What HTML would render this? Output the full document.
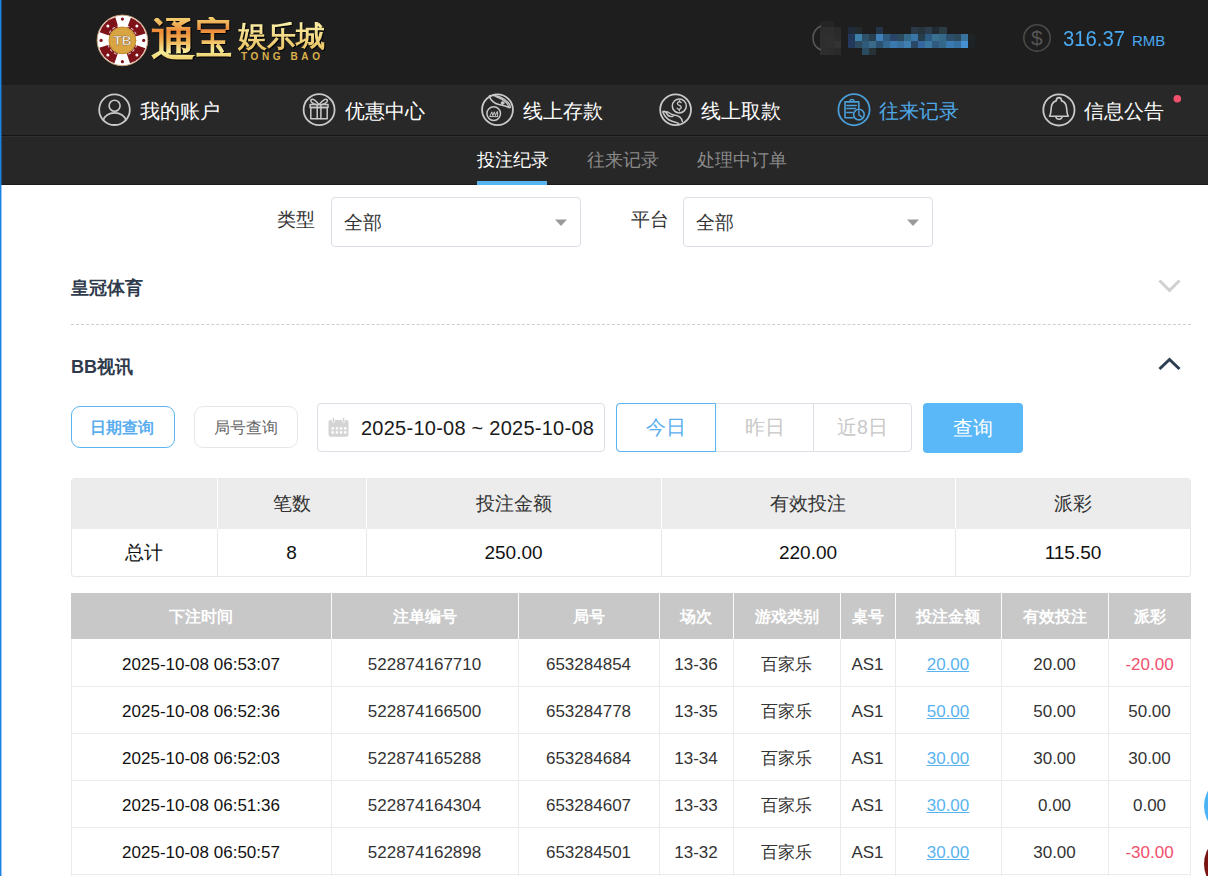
<!DOCTYPE html><html><head><meta charset="utf-8"><style>
*{margin:0;padding:0;box-sizing:border-box}
html,body{width:1208px;height:876px;overflow:hidden;background:#fff;font-family:"Liberation Sans",sans-serif}
.abs{position:absolute}
.t{position:absolute;white-space:nowrap;line-height:1}
</style></head><body>
<div class="abs" style="left:0;top:0;width:1208px;height:85px;background:#1e1e1e"></div>
<div class="abs" style="left:0;top:85px;width:1208px;height:50px;background:#282828"></div>
<div class="abs" style="left:0;top:137px;width:1208px;height:48px;background:#272727"></div>
<div class="abs" style="left:0;top:134.5px;width:1208px;height:1.5px;background:#151515"></div>
<div class="abs" style="left:0;top:136px;width:1208px;height:1px;background:#2f2f2f"></div>
<div class="abs" style="left:0;top:183.5px;width:1208px;height:1.5px;background:#1b1b1b"></div>
<div class="t" style="left:140px;top:101px;font-size:20px;color:#ffffff">我的账户</div>
<div class="t" style="left:344.5px;top:101px;font-size:20px;color:#ffffff">优惠中心</div>
<div class="t" style="left:523px;top:101px;font-size:20px;color:#ffffff">线上存款</div>
<div class="t" style="left:701px;top:101px;font-size:20px;color:#ffffff">线上取款</div>
<div class="t" style="left:879px;top:101px;font-size:20px;color:#4fa8ea">往来记录</div>
<div class="t" style="left:1084px;top:101px;font-size:20px;color:#ffffff">信息公告</div>
<div class="t" style="left:477px;top:152px;font-size:17.5px;color:#fff">投注纪录</div>
<div class="abs" style="left:477px;top:181px;width:70px;height:4px;background:#56b4f0"></div>
<div class="t" style="left:587px;top:152px;font-size:17.5px;color:#8a8a8a">往来记录</div>
<div class="t" style="left:697px;top:152px;font-size:17.5px;color:#8a8a8a">处理中订单</div>
<div class="t" style="left:1062.5px;top:28px;font-size:22px;transform:scaleX(0.92);transform-origin:0 0;color:#4aaaf2">316.37</div>
<div class="t" style="left:1132px;top:33px;font-size:15px;color:#4aa8f0">RMB</div>
<div class="abs" style="left:0;top:0;width:1px;height:876px;background:#1a84e0"></div><div class="abs" style="left:1px;top:0;width:1px;height:876px;background:rgba(26,132,224,0.45)"></div>
<div class="t" style="left:277px;top:210px;font-size:19px;color:#333">类型</div>
<div class="abs" style="left:331px;top:197px;width:250px;height:50px;border:1px solid #dcdfe6;border-radius:4px"></div>
<div class="t" style="left:344px;top:213px;font-size:19px;color:#333">全部</div>
<div class="t" style="left:631px;top:210px;font-size:19px;color:#333">平台</div>
<div class="abs" style="left:683px;top:197px;width:250px;height:50px;border:1px solid #dcdfe6;border-radius:4px"></div>
<div class="t" style="left:696px;top:213px;font-size:19px;color:#333">全部</div>
<div class="t" style="left:71px;top:279px;font-size:18px;font-weight:bold;color:#2f3b4c">皇冠体育</div>
<div class="abs" style="left:71px;top:324px;width:1120px;height:0;border-top:1px dashed #cfcfcf"></div>
<div class="t" style="left:71px;top:358px;font-size:18px;font-weight:bold;color:#2f3b4c">BB视讯</div>
<div class="abs" style="left:71px;top:406px;width:104px;height:42px;border:1px solid #5cb4f2;border-radius:9px"></div>
<div class="t" style="left:90px;top:420px;font-size:16px;font-weight:bold;color:#5aaeef">日期查询</div>
<div class="abs" style="left:194px;top:406px;width:104px;height:42px;border:1px solid #e6e6e6;border-radius:9px"></div>
<div class="t" style="left:213.5px;top:420px;font-size:16px;color:#666">局号查询</div>
<div class="abs" style="left:317px;top:403px;width:288px;height:49px;border:1px solid #dcdfe6;border-radius:4px"></div>
<div class="t" style="left:361px;top:418px;font-size:20px;letter-spacing:0.25px;color:#1a1a1a">2025-10-08 ~ 2025-10-08</div>
<div class="abs" style="left:616px;top:403px;width:296px;height:49px;border:1px solid #dcdfe6;border-radius:4px"></div>
<div class="abs" style="left:616px;top:403px;width:100px;height:49px;border:1px solid #5cb4f2;border-radius:4px 0 0 4px"></div>
<div class="abs" style="left:813px;top:404px;width:1px;height:47px;background:#dcdfe6"></div>
<div class="t" style="left:646px;top:418px;font-size:19.5px;color:#5aaeef">今日</div>
<div class="t" style="left:745px;top:418px;font-size:19.5px;color:#c8c8c8">昨日</div>
<div class="t" style="left:837px;top:418px;font-size:19.5px;color:#c8c8c8">近8日</div>
<div class="abs" style="left:923px;top:403px;width:100px;height:50px;background:#5ab8f8;border-radius:4px"></div>
<div class="t" style="left:953px;top:418px;font-size:20px;color:#fff">查询</div>
<div class="abs" style="left:71px;top:478px;width:1120px;height:99px;border:1px solid #e8e8e8;border-radius:3px;overflow:hidden">
<div class="abs" style="left:-1px;top:-1px;width:1122px;height:51px;background:#ececec"></div>
</div>
<div class="abs" style="left:217px;top:478px;width:1px;height:51px;background:#fff"></div>
<div class="abs" style="left:217px;top:529px;width:1px;height:48px;background:#e8e8e8"></div>
<div class="abs" style="left:366px;top:478px;width:1px;height:51px;background:#fff"></div>
<div class="abs" style="left:366px;top:529px;width:1px;height:48px;background:#e8e8e8"></div>
<div class="abs" style="left:661px;top:478px;width:1px;height:51px;background:#fff"></div>
<div class="abs" style="left:661px;top:529px;width:1px;height:48px;background:#e8e8e8"></div>
<div class="abs" style="left:955px;top:478px;width:1px;height:51px;background:#fff"></div>
<div class="abs" style="left:955px;top:529px;width:1px;height:48px;background:#e8e8e8"></div>
<div class="t" style="left:71px;width:146px;text-align:center;top:494px;font-size:19px;color:#333"></div>
<div class="t" style="left:71px;width:146px;text-align:center;top:543px;font-size:19px;color:#111">总计</div>
<div class="t" style="left:217px;width:149px;text-align:center;top:494px;font-size:19px;color:#333">笔数</div>
<div class="t" style="left:217px;width:149px;text-align:center;top:543px;font-size:19px;color:#111">8</div>
<div class="t" style="left:366px;width:295px;text-align:center;top:494px;font-size:19px;color:#333">投注金额</div>
<div class="t" style="left:366px;width:295px;text-align:center;top:543px;font-size:19px;color:#111">250.00</div>
<div class="t" style="left:661px;width:294px;text-align:center;top:494px;font-size:19px;color:#333">有效投注</div>
<div class="t" style="left:661px;width:294px;text-align:center;top:543px;font-size:19px;color:#111">220.00</div>
<div class="t" style="left:955px;width:236px;text-align:center;top:494px;font-size:19px;color:#333">派彩</div>
<div class="t" style="left:955px;width:236px;text-align:center;top:543px;font-size:19px;color:#111">115.50</div>
<div class="abs" style="left:71px;top:593px;width:1120px;height:46px;background:#c8c8c8"></div>
<div class="abs" style="left:331px;top:593px;width:1px;height:46px;background:#fbfbfb"></div>
<div class="abs" style="left:331px;top:639px;width:1px;height:237px;background:#ebebeb"></div>
<div class="abs" style="left:518px;top:593px;width:1px;height:46px;background:#fbfbfb"></div>
<div class="abs" style="left:518px;top:639px;width:1px;height:237px;background:#ebebeb"></div>
<div class="abs" style="left:659px;top:593px;width:1px;height:46px;background:#fbfbfb"></div>
<div class="abs" style="left:659px;top:639px;width:1px;height:237px;background:#ebebeb"></div>
<div class="abs" style="left:733px;top:593px;width:1px;height:46px;background:#fbfbfb"></div>
<div class="abs" style="left:733px;top:639px;width:1px;height:237px;background:#ebebeb"></div>
<div class="abs" style="left:840px;top:593px;width:1px;height:46px;background:#fbfbfb"></div>
<div class="abs" style="left:840px;top:639px;width:1px;height:237px;background:#ebebeb"></div>
<div class="abs" style="left:895px;top:593px;width:1px;height:46px;background:#fbfbfb"></div>
<div class="abs" style="left:895px;top:639px;width:1px;height:237px;background:#ebebeb"></div>
<div class="abs" style="left:1001px;top:593px;width:1px;height:46px;background:#fbfbfb"></div>
<div class="abs" style="left:1001px;top:639px;width:1px;height:237px;background:#ebebeb"></div>
<div class="abs" style="left:1108px;top:593px;width:1px;height:46px;background:#fbfbfb"></div>
<div class="abs" style="left:1108px;top:639px;width:1px;height:237px;background:#ebebeb"></div>
<div class="abs" style="left:71px;top:639px;width:1px;height:237px;background:#ebebeb"></div>
<div class="abs" style="left:1190px;top:639px;width:1px;height:237px;background:#ebebeb"></div>
<div class="abs" style="left:71px;top:686px;width:1120px;height:1px;background:#ebebeb"></div>
<div class="abs" style="left:71px;top:733px;width:1120px;height:1px;background:#ebebeb"></div>
<div class="abs" style="left:71px;top:780px;width:1120px;height:1px;background:#ebebeb"></div>
<div class="abs" style="left:71px;top:827px;width:1120px;height:1px;background:#ebebeb"></div>
<div class="abs" style="left:71px;top:874px;width:1120px;height:1px;background:#ebebeb"></div>
<div class="t" style="left:71px;width:260px;text-align:center;top:609px;font-size:16px;font-weight:bold;color:#fff">下注时间</div>
<div class="t" style="left:331px;width:187px;text-align:center;top:609px;font-size:16px;font-weight:bold;color:#fff">注单编号</div>
<div class="t" style="left:518px;width:141px;text-align:center;top:609px;font-size:16px;font-weight:bold;color:#fff">局号</div>
<div class="t" style="left:659px;width:74px;text-align:center;top:609px;font-size:16px;font-weight:bold;color:#fff">场次</div>
<div class="t" style="left:733px;width:107px;text-align:center;top:609px;font-size:16px;font-weight:bold;color:#fff">游戏类别</div>
<div class="t" style="left:840px;width:55px;text-align:center;top:609px;font-size:16px;font-weight:bold;color:#fff">桌号</div>
<div class="t" style="left:895px;width:106px;text-align:center;top:609px;font-size:16px;font-weight:bold;color:#fff">投注金额</div>
<div class="t" style="left:1001px;width:107px;text-align:center;top:609px;font-size:16px;font-weight:bold;color:#fff">有效投注</div>
<div class="t" style="left:1108px;width:83px;text-align:center;top:609px;font-size:16px;font-weight:bold;color:#fff">派彩</div>
<div class="t" style="left:71px;width:260px;text-align:center;top:656px;font-size:17px;color:#111;">2025-10-08 06:53:07</div>
<div class="t" style="left:331px;width:187px;text-align:center;top:656px;font-size:17px;color:#333;">522874167710</div>
<div class="t" style="left:518px;width:141px;text-align:center;top:656px;font-size:17px;color:#333;">653284854</div>
<div class="t" style="left:659px;width:74px;text-align:center;top:656px;font-size:17px;color:#333;">13-36</div>
<div class="t" style="left:733px;width:107px;text-align:center;top:656px;font-size:17px;color:#333;">百家乐</div>
<div class="t" style="left:840px;width:55px;text-align:center;top:656px;font-size:17px;color:#333;">AS1</div>
<div class="t" style="left:895px;width:106px;text-align:center;top:656px;font-size:17px;color:#5ab4f0;text-decoration:underline;">20.00</div>
<div class="t" style="left:1001px;width:107px;text-align:center;top:656px;font-size:17px;color:#333;">20.00</div>
<div class="t" style="left:1108px;width:83px;text-align:center;top:656px;font-size:17px;color:#f0506e;">-20.00</div>
<div class="t" style="left:71px;width:260px;text-align:center;top:703px;font-size:17px;color:#111;">2025-10-08 06:52:36</div>
<div class="t" style="left:331px;width:187px;text-align:center;top:703px;font-size:17px;color:#333;">522874166500</div>
<div class="t" style="left:518px;width:141px;text-align:center;top:703px;font-size:17px;color:#333;">653284778</div>
<div class="t" style="left:659px;width:74px;text-align:center;top:703px;font-size:17px;color:#333;">13-35</div>
<div class="t" style="left:733px;width:107px;text-align:center;top:703px;font-size:17px;color:#333;">百家乐</div>
<div class="t" style="left:840px;width:55px;text-align:center;top:703px;font-size:17px;color:#333;">AS1</div>
<div class="t" style="left:895px;width:106px;text-align:center;top:703px;font-size:17px;color:#5ab4f0;text-decoration:underline;">50.00</div>
<div class="t" style="left:1001px;width:107px;text-align:center;top:703px;font-size:17px;color:#333;">50.00</div>
<div class="t" style="left:1108px;width:83px;text-align:center;top:703px;font-size:17px;color:#333;">50.00</div>
<div class="t" style="left:71px;width:260px;text-align:center;top:750px;font-size:17px;color:#111;">2025-10-08 06:52:03</div>
<div class="t" style="left:331px;width:187px;text-align:center;top:750px;font-size:17px;color:#333;">522874165288</div>
<div class="t" style="left:518px;width:141px;text-align:center;top:750px;font-size:17px;color:#333;">653284684</div>
<div class="t" style="left:659px;width:74px;text-align:center;top:750px;font-size:17px;color:#333;">13-34</div>
<div class="t" style="left:733px;width:107px;text-align:center;top:750px;font-size:17px;color:#333;">百家乐</div>
<div class="t" style="left:840px;width:55px;text-align:center;top:750px;font-size:17px;color:#333;">AS1</div>
<div class="t" style="left:895px;width:106px;text-align:center;top:750px;font-size:17px;color:#5ab4f0;text-decoration:underline;">30.00</div>
<div class="t" style="left:1001px;width:107px;text-align:center;top:750px;font-size:17px;color:#333;">30.00</div>
<div class="t" style="left:1108px;width:83px;text-align:center;top:750px;font-size:17px;color:#333;">30.00</div>
<div class="t" style="left:71px;width:260px;text-align:center;top:797px;font-size:17px;color:#111;">2025-10-08 06:51:36</div>
<div class="t" style="left:331px;width:187px;text-align:center;top:797px;font-size:17px;color:#333;">522874164304</div>
<div class="t" style="left:518px;width:141px;text-align:center;top:797px;font-size:17px;color:#333;">653284607</div>
<div class="t" style="left:659px;width:74px;text-align:center;top:797px;font-size:17px;color:#333;">13-33</div>
<div class="t" style="left:733px;width:107px;text-align:center;top:797px;font-size:17px;color:#333;">百家乐</div>
<div class="t" style="left:840px;width:55px;text-align:center;top:797px;font-size:17px;color:#333;">AS1</div>
<div class="t" style="left:895px;width:106px;text-align:center;top:797px;font-size:17px;color:#5ab4f0;text-decoration:underline;">30.00</div>
<div class="t" style="left:1001px;width:107px;text-align:center;top:797px;font-size:17px;color:#333;">0.00</div>
<div class="t" style="left:1108px;width:83px;text-align:center;top:797px;font-size:17px;color:#333;">0.00</div>
<div class="t" style="left:71px;width:260px;text-align:center;top:844px;font-size:17px;color:#111;">2025-10-08 06:50:57</div>
<div class="t" style="left:331px;width:187px;text-align:center;top:844px;font-size:17px;color:#333;">522874162898</div>
<div class="t" style="left:518px;width:141px;text-align:center;top:844px;font-size:17px;color:#333;">653284501</div>
<div class="t" style="left:659px;width:74px;text-align:center;top:844px;font-size:17px;color:#333;">13-32</div>
<div class="t" style="left:733px;width:107px;text-align:center;top:844px;font-size:17px;color:#333;">百家乐</div>
<div class="t" style="left:840px;width:55px;text-align:center;top:844px;font-size:17px;color:#333;">AS1</div>
<div class="t" style="left:895px;width:106px;text-align:center;top:844px;font-size:17px;color:#5ab4f0;text-decoration:underline;">30.00</div>
<div class="t" style="left:1001px;width:107px;text-align:center;top:844px;font-size:17px;color:#333;">30.00</div>
<div class="t" style="left:1108px;width:83px;text-align:center;top:844px;font-size:17px;color:#f0506e;">-30.00</div>
<svg class="abs" style="left:0;top:0" width="1208" height="876" viewBox="0 0 1208 876" fill="none" stroke-linecap="round" stroke-linejoin="round"><g stroke="#c9c9c9" stroke-width="1.8"><circle cx="114.5" cy="109.7" r="15.3"/><circle cx="114.6" cy="105.7" r="5.5" stroke-width="1.6"/><path d="M103.4,120.2 A11.3,8.4 0 0 1 125.8,120.2" stroke-width="1.7"/></g><g stroke="#c9c9c9" stroke-width="1.5"><circle cx="319.1" cy="109.7" r="15.5" stroke-width="1.8"/><rect x="310.1" y="104.6" width="17.9" height="3"/><rect x="310.8" y="107.6" width="16.4" height="11.1"/><path d="M317.2,104.8 V118.7 M320.9,104.8 V118.7"/><path d="M319,104.6 C316.5,101 313,98.5 311.3,99.6 C309.8,100.8 312,103.6 316,104.4"/><path d="M319.2,104.6 C321.7,101 325.2,98.5 326.9,99.6 C328.4,100.8 326.2,103.6 322.2,104.4"/></g><g stroke="#c9c9c9" stroke-width="1.6"><circle cx="497.5" cy="109.7" r="15.4" stroke-width="1.8"/><circle cx="493.7" cy="113.6" r="6.8" stroke-width="1.5"/><path d="M489.6,116.6 H497.8 M490.2,115.6 L491.8,111.8 L492.8,115.6 L494.4,111.8 L495.4,115.6 L497,111.8 M497.6,111.8 V115.6" stroke-width="1"/><path d="M489.5,95.8 C495,94.8 500,96.5 504.5,99.5 C508,101.8 510.5,104 510.3,107.3" stroke-width="1.5"/><path d="M495.5,96.4 C499,97.7 503,99.7 506.3,102.6 C507.8,104 508.5,105.8 508.8,107.4" stroke-width="1.3"/><path d="M489.4,96.6 C491,100.6 494.5,103.5 499,104.6 C502,105.2 505,105.6 509.6,107.8" stroke-width="1.5"/><circle cx="502.6" cy="103" r="1.4" fill="#c9c9c9" stroke-width="1"/></g><g stroke="#c9c9c9" stroke-width="1.6"><circle cx="675.6" cy="109.7" r="15.4" stroke-width="1.8"/><circle cx="679.3" cy="105.9" r="7" stroke-width="1.5"/><path d="M681.2,102.6 C680.5,101.8 679,101.6 678,102.3 C677,103 677.3,104.4 678.6,105 L680.2,105.8 C681.4,106.4 681.5,108 680.4,108.7 C679.3,109.4 677.8,109 677.2,108.3 M679.4,100.6 V101.8 M679.4,109.4 V110.8" stroke-width="1.3"/><path d="M662.8,111.8 C663.6,110.8 665,111 665.8,112.2 L668.5,116 M664.8,112 C666,111.5 668,112 669.4,113 C671,114.4 673,115 675,115.2 C678.5,115.5 681.5,117.5 682.3,121.4 M668.5,115.4 C669.8,116.5 671.5,116.6 673,116.2 M663,112.4 C664.5,116 668,119.8 671.5,121 C674.5,122 677.5,122.5 678.6,123.4" stroke-width="1.5"/></g><g stroke="#4b9fd9" stroke-width="1.6"><circle cx="854" cy="109.7" r="15.6" stroke-width="1.8"/><path d="M858.8,108.2 V101.9 H845 V117.8 H853"/><path d="M849.8,101.6 A2.1,2.1 0 0 1 854,101.6" stroke-width="1.4"/><path d="M846.8,105.6 H856.3 M846.8,108.6 H855.5 M846.8,112.4 H852.3" stroke-width="1.5"/><circle cx="858.9" cy="114.6" r="5.3"/><path d="M858.9,110.8 V114.9 L861.6,116.9" stroke-width="1.4"/></g><g stroke="#c9c9c9" stroke-width="1.6"><circle cx="1058.9" cy="109.9" r="15.6" stroke-width="1.8"/><path d="M1049.6,116.3 H1068.3 C1067.2,114.2 1066.7,111.5 1066.6,108.3 C1066.4,104.2 1064.6,101.6 1061.6,100.9 C1061.5,98.9 1060.6,97.6 1058.9,97.6 C1057.2,97.6 1056.3,98.9 1056.2,100.9 C1053.2,101.6 1051.4,104.2 1051.2,108.3 C1051.1,111.5 1050.6,114.2 1049.6,116.3 Z"/><path d="M1055.8,116.8 A3.3,3.3 0 0 0 1062.2,116.8" stroke-width="1.5"/></g><circle cx="1177.3" cy="98.7" r="3.8" fill="#f0506e"/><circle cx="1037" cy="37.9" r="13.2" stroke="#4a4a4a" stroke-width="1.6"/><path d="M555,219.5 H567 L561,226 Z" fill="#9a9a9a"/><path d="M907,219.5 H919 L913,226 Z" fill="#9a9a9a"/><polyline points="1159.5,280.5 1169.5,290.5 1179.5,280.5" stroke="#d0d0d0" stroke-width="3" stroke-linecap="butt" stroke-linejoin="miter"/><polyline points="1159.5,369 1169.5,359.5 1179.5,369" stroke="#2c3e50" stroke-width="3" stroke-linecap="butt" stroke-linejoin="miter"/><g><rect x="328.5" y="420" width="20" height="16.8" rx="2" fill="#d4d4d4"/><rect x="332.2" y="417.4" width="2.4" height="5" rx="1" fill="#d4d4d4" stroke="#fff" stroke-width="0.8"/><rect x="342.4" y="417.4" width="2.4" height="5" rx="1" fill="#d4d4d4" stroke="#fff" stroke-width="0.8"/><rect x="331.5" y="427.2" width="2.4" height="2.4" fill="#fff"/><rect x="335.7" y="427.2" width="2.4" height="2.4" fill="#fff"/><rect x="339.9" y="427.2" width="2.4" height="2.4" fill="#fff"/><rect x="344.1" y="427.2" width="2.4" height="2.4" fill="#fff"/><rect x="331.5" y="431.2" width="2.4" height="2.4" fill="#fff"/><rect x="335.7" y="431.2" width="2.4" height="2.4" fill="#fff"/><rect x="339.9" y="431.2" width="2.4" height="2.4" fill="#fff"/><rect x="344.1" y="431.2" width="2.4" height="2.4" fill="#fff"/></g><g><circle cx="122.4" cy="40.4" r="25.3" fill="#fff" stroke="#caa27a" stroke-width="1"/><circle cx="122.4" cy="40.4" r="18.9" stroke="#7d1218" stroke-width="10.6" stroke-dasharray="17.3 12.4" transform="rotate(18.8 122.4 40.4)" stroke-linecap="butt"/><circle cx="136.90" cy="54.90" r="1.5" fill="#fff"/><circle cx="107.90" cy="54.90" r="1.5" fill="#fff"/><circle cx="107.90" cy="25.90" r="1.5" fill="#fff"/><circle cx="136.90" cy="25.90" r="1.5" fill="#fff"/><circle cx="143.70" cy="40.40" r="1.6" fill="#7d1218"/><circle cx="122.40" cy="61.70" r="1.6" fill="#7d1218"/><circle cx="101.10" cy="40.40" r="1.6" fill="#7d1218"/><circle cx="122.40" cy="19.10" r="1.6" fill="#7d1218"/><circle cx="122.4" cy="40.4" r="15" stroke="#fff" stroke-width="1.2" stroke-dasharray="2 3" opacity="0.7"/><circle cx="122.4" cy="40.4" r="13.4" fill="#d9a542" stroke="#c08a2a" stroke-width="1"/><text x="122.6" y="45.3" text-anchor="middle" font-family="Liberation Sans" font-weight="bold" font-size="13.5" fill="#ffffff" stroke="#8a6028" stroke-width="0.5">TB</text></g></svg>
<div class="t" style="left:1031px;top:27px;font-size:21px;color:#555">$</div>
<div class="t" style="left:151px;top:18px;font-family:'Liberation Serif',serif;font-size:45px;font-weight:bold;background:linear-gradient(180deg,#f3d070 0%,#ec8a3a 30%,#f0b050 50%,#f8ec9a 75%,#e8c45a 100%);-webkit-background-clip:text;color:transparent;filter:drop-shadow(1px 1.5px 0.5px #000)">通</div>
<div class="t" style="left:196px;top:17px;font-family:'Liberation Serif',serif;font-size:44px;font-weight:bold;transform:scaleX(0.82);transform-origin:0 0;background:linear-gradient(180deg,#f3d070 0%,#ec8a3a 30%,#f0b050 50%,#f8ec9a 75%,#e8c45a 100%);-webkit-background-clip:text;color:transparent;filter:drop-shadow(1px 1.5px 0.5px #000)">宝</div>
<div class="t" style="left:238px;top:22px;font-family:'Liberation Serif',serif;font-size:29px;font-weight:bold;background:linear-gradient(180deg,#fbf0a8 0%,#e8c060 100%);-webkit-background-clip:text;color:transparent;filter:drop-shadow(1px 1px 0 #000)">娱乐城</div>
<div class="t" style="left:241px;top:52px;font-family:'Liberation Sans',sans-serif;font-size:10px;font-weight:bold;letter-spacing:3.6px;color:#dcb04a">TONG BAO</div>
<div class="abs" style="left:820.4px;top:20.5px;width:7px;height:7px;background:#252525"></div><div class="abs" style="left:827.3px;top:20.5px;width:7px;height:7px;background:#252525"></div><div class="abs" style="left:820.4px;top:27.3px;width:7px;height:7px;background:#2d2d2d"></div><div class="abs" style="left:827.3px;top:27.3px;width:7px;height:7px;background:#2e2e2e"></div><div class="abs" style="left:834.3px;top:27.3px;width:7px;height:7px;background:#2a2a2a"></div><div class="abs" style="left:820.4px;top:34.2px;width:7px;height:7px;background:#2f2f2f"></div><div class="abs" style="left:827.3px;top:34.2px;width:7px;height:7px;background:#2f2f2f"></div><div class="abs" style="left:834.3px;top:34.2px;width:7px;height:7px;background:#2c2c2c"></div><div class="abs" style="left:820.4px;top:41.3px;width:7px;height:7px;background:#2e2e2e"></div><div class="abs" style="left:827.3px;top:41.3px;width:7px;height:7px;background:#2f2f2f"></div><div class="abs" style="left:834.3px;top:41.3px;width:7px;height:7px;background:#333333"></div><div class="abs" style="left:820.4px;top:48.3px;width:7px;height:7px;background:#2d2d2d"></div><div class="abs" style="left:827.3px;top:48.3px;width:7px;height:7px;background:#2c2c2c"></div><div class="abs" style="left:834.3px;top:48.3px;width:7px;height:7px;background:#2a2a2a"></div><div class="abs" style="left:848.0px;top:27.3px;width:7.2px;height:7.2px;background:#1f2a3a"></div><div class="abs" style="left:855.0px;top:27.3px;width:7.2px;height:7.2px;background:#232a2e"></div><div class="abs" style="left:876.1px;top:27.3px;width:7.2px;height:7.2px;background:#243447"></div><div class="abs" style="left:911.3px;top:27.3px;width:7.2px;height:7.2px;background:#2a3a48"></div><div class="abs" style="left:918.3px;top:27.3px;width:7.2px;height:7.2px;background:#26343e"></div><div class="abs" style="left:925.3px;top:27.3px;width:7.2px;height:7.2px;background:#2c3e4e"></div><div class="abs" style="left:932.4px;top:27.3px;width:7.2px;height:7.2px;background:#222b33"></div><div class="abs" style="left:939.4px;top:27.3px;width:7.2px;height:7.2px;background:#2b3c44"></div><div class="abs" style="left:848.0px;top:34.2px;width:7.2px;height:7.2px;background:#22375a"></div><div class="abs" style="left:855.0px;top:34.2px;width:7.2px;height:7.2px;background:#3d7fa8"></div><div class="abs" style="left:862.1px;top:34.2px;width:7.2px;height:7.2px;background:#2b5068"></div><div class="abs" style="left:869.1px;top:34.2px;width:7.2px;height:7.2px;background:#264050"></div><div class="abs" style="left:876.1px;top:34.2px;width:7.2px;height:7.2px;background:#3f80b8"></div><div class="abs" style="left:883.1px;top:34.2px;width:7.2px;height:7.2px;background:#2f5a80"></div><div class="abs" style="left:890.2px;top:34.2px;width:7.2px;height:7.2px;background:#294466"></div><div class="abs" style="left:897.2px;top:34.2px;width:7.2px;height:7.2px;background:#2b4a5e"></div><div class="abs" style="left:904.2px;top:34.2px;width:7.2px;height:7.2px;background:#35698a"></div><div class="abs" style="left:911.3px;top:34.2px;width:7.2px;height:7.2px;background:#3b76a8"></div><div class="abs" style="left:918.3px;top:34.2px;width:7.2px;height:7.2px;background:#263e4b"></div><div class="abs" style="left:925.3px;top:34.2px;width:7.2px;height:7.2px;background:#2d5a80"></div><div class="abs" style="left:932.4px;top:34.2px;width:7.2px;height:7.2px;background:#3a7090"></div><div class="abs" style="left:939.4px;top:34.2px;width:7.2px;height:7.2px;background:#34698a"></div><div class="abs" style="left:946.4px;top:34.2px;width:7.2px;height:7.2px;background:#2d4e6a"></div><div class="abs" style="left:953.5px;top:34.2px;width:7.2px;height:7.2px;background:#2c4a5c"></div><div class="abs" style="left:960.5px;top:34.2px;width:7.2px;height:7.2px;background:#3a72a0"></div><div class="abs" style="left:967.5px;top:34.2px;width:7.2px;height:7.2px;background:#1e2426"></div><div class="abs" style="left:848.0px;top:41.3px;width:7.2px;height:7.2px;background:#233a5c"></div><div class="abs" style="left:855.0px;top:41.3px;width:7.2px;height:7.2px;background:#2d4a5e"></div><div class="abs" style="left:862.1px;top:41.3px;width:7.2px;height:7.2px;background:#2f5a78"></div><div class="abs" style="left:869.1px;top:41.3px;width:7.2px;height:7.2px;background:#3a6a88"></div><div class="abs" style="left:876.1px;top:41.3px;width:7.2px;height:7.2px;background:#2c5070"></div><div class="abs" style="left:883.1px;top:41.3px;width:7.2px;height:7.2px;background:#336890"></div><div class="abs" style="left:890.2px;top:41.3px;width:7.2px;height:7.2px;background:#3a78b0"></div><div class="abs" style="left:897.2px;top:41.3px;width:7.2px;height:7.2px;background:#3a70a0"></div><div class="abs" style="left:904.2px;top:41.3px;width:7.2px;height:7.2px;background:#4080b0"></div><div class="abs" style="left:911.3px;top:41.3px;width:7.2px;height:7.2px;background:#2b4866"></div><div class="abs" style="left:918.3px;top:41.3px;width:7.2px;height:7.2px;background:#3568a0"></div><div class="abs" style="left:925.3px;top:41.3px;width:7.2px;height:7.2px;background:#3a78a0"></div><div class="abs" style="left:932.4px;top:41.3px;width:7.2px;height:7.2px;background:#305a80"></div><div class="abs" style="left:939.4px;top:41.3px;width:7.2px;height:7.2px;background:#33688a"></div><div class="abs" style="left:946.4px;top:41.3px;width:7.2px;height:7.2px;background:#3a78b0"></div><div class="abs" style="left:953.5px;top:41.3px;width:7.2px;height:7.2px;background:#3570a0"></div><div class="abs" style="left:960.5px;top:41.3px;width:7.2px;height:7.2px;background:#4590d0"></div><div class="abs" style="left:967.5px;top:41.3px;width:7.2px;height:7.2px;background:#1e2426"></div><div class="abs" style="left:862.1px;top:48.3px;width:7.2px;height:7.2px;background:#2a4a60"></div><div class="abs" style="left:869.1px;top:48.3px;width:7.2px;height:7.2px;background:#253238"></div>
<svg class="abs" style="left:0;top:0" width="1208" height="876"><path d="M821,26 A13,13 0 0 0 821,50" stroke="#5a5a5a" stroke-width="1.5" fill="none"/></svg>
<div class="abs" style="left:1204px;top:773.5px;width:64px;height:64px;border-radius:50%;background:#4cb3f6"></div>
<div class="abs" style="left:1204px;top:831.5px;width:64px;height:64px;border-radius:50%;background:#7a1414"></div>
</body></html>
